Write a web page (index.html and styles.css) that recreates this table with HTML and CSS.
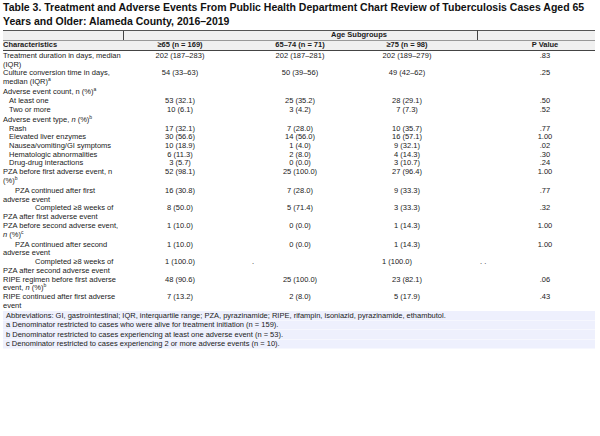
FILE: index.html
```html
<!DOCTYPE html>
<html>
<head>
<meta charset="utf-8">
<link rel="stylesheet" href="styles.css">
</head>
<body>
<div class="page">
<h1 class="title">Table 3. Treatment and Adverse Events From Public Health Department Chart Review of Tuberculosis Cases Aged 65 Years and Older: Alameda County, 2016–2019</h1>
<table class="tbl">
<colgroup><col class="c0"><col class="c1"><col class="c2"><col class="c3"><col class="c4"></colgroup>
<thead>
<tr class="h1"><th></th><th colspan="3" class="grp">Age Subgroups</th><th class="last"></th></tr>
<tr class="h2"><th class="lbl">Characteristics</th><th>≥65 (n = 169)</th><th>65–74 (n = 71)</th><th class="v3">≥75 (n = 98)</th><th class="pv">P Value</th></tr>
</thead>
<tbody>
<tr class="first"><td class="lbl">Treatment duration in days, median (IQR)</td><td>202 (187–283)</td><td>202 (187–281)</td><td class="v3">202 (189–279)</td><td class="pv">.83</td></tr>
<tr><td class="lbl">Culture conversion time in days, median (IQR)<sup>a</sup></td><td>54 (33–63)</td><td>50 (39–56)</td><td class="v3">49 (42–62)</td><td class="pv">.25</td></tr>
<tr class="sec"><td class="lbl">Adverse event count, n (%)<sup>a</sup></td><td></td><td></td><td class="v3"></td><td class="pv"></td></tr>
<tr><td class="lbl l1">At least one</td><td>53 (32.1)</td><td>25 (35.2)</td><td class="v3">28 (29.1)</td><td class="pv">.50</td></tr>
<tr><td class="lbl l1">Two or more</td><td>10 (6.1)</td><td>3 (4.2)</td><td class="v3">7 (7.3)</td><td class="pv">.52</td></tr>
<tr class="sec"><td class="lbl">Adverse event type, <i>n</i> (%)<sup>b</sup></td><td></td><td></td><td class="v3"></td><td class="pv"></td></tr>
<tr><td class="lbl l1">Rash</td><td>17 (32.1)</td><td>7 (28.0)</td><td class="v3">10 (35.7)</td><td class="pv">.77</td></tr>
<tr><td class="lbl l1">Elevated liver enzymes</td><td>30 (56.6)</td><td>14 (56.0)</td><td class="v3">16 (57.1)</td><td class="pv">1.00</td></tr>
<tr><td class="lbl l1">Nausea/vomiting/GI symptoms</td><td>10 (18.9)</td><td>1 (4.0)</td><td class="v3">9 (32.1)</td><td class="pv">.02</td></tr>
<tr><td class="lbl l1">Hematologic abnormalities</td><td>6 (11.3)</td><td>2 (8.0)</td><td class="v3">4 (14.3)</td><td class="pv">.30</td></tr>
<tr><td class="lbl l1">Drug-drug interactions</td><td>3 (5.7)</td><td>0 (0.0)</td><td class="v3">3 (10.7)</td><td class="pv">.24</td></tr>
<tr><td class="lbl">PZA before first adverse event, n (%)<sup>b</sup></td><td>52 (98.1)</td><td>25 (100.0)</td><td class="v3">27 (96.4)</td><td class="pv">1.00</td></tr>
<tr class="gap"><td class="lbl l2">PZA continued after first adverse event</td><td>16 (30.8)</td><td>7 (28.0)</td><td class="v3">9 (33.3)</td><td class="pv">.77</td></tr>
<tr><td class="lbl l3">Completed ≥8 weeks of PZA after first adverse event</td><td>8 (50.0)</td><td>5 (71.4)</td><td class="v3">3 (33.3)</td><td class="pv">.32</td></tr>
<tr><td class="lbl">PZA before second adverse event, <i>n</i> (%)<sup>c</sup></td><td>1 (10.0)</td><td>0 (0.0)</td><td class="v3">1 (14.3)</td><td class="pv">1.00</td></tr>
<tr class="gap"><td class="lbl l2">PZA continued after second adverse event</td><td>1 (10.0)</td><td>0 (0.0)</td><td class="v3">1 (14.3)</td><td class="pv">1.00</td></tr>
<tr><td class="lbl l3">Completed ≥8 weeks of PZA after second adverse event</td><td>1 (100.0)</td><td class="dot">.</td><td class="v3 v3b">1 (100.0)</td><td class="pv pvl">. .</td></tr>
<tr><td class="lbl">RIPE regimen before first adverse event, <i>n</i> (%)<sup>b</sup></td><td>48 (90.6)</td><td>25 (100.0)</td><td class="v3">23 (82.1)</td><td class="pv">.06</td></tr>
<tr><td class="lbl">RIPE continued after first adverse event</td><td>7 (13.2)</td><td>2 (8.0)</td><td class="v3">5 (17.9)</td><td class="pv">.43</td></tr>
</tbody>
</table>
<div class="notes">
<p>Abbreviations: GI, gastrointestinal; IQR, interquartile range; PZA, pyrazinamide; RIPE, rifampin, isoniazid, pyrazinamide, ethambutol.</p>
<p>a Denominator restricted to cases who were alive for treatment initiation (n = 159).</p>
<p>b Denominator restricted to cases experiencing at least one adverse event (n = 53).</p>
<p>c Denominator restricted to cases experiencing 2 or more adverse events (n = 10).</p>
</div>
</div>
</body>
</html>
```
FILE: styles.css
```css
html, body {
  margin: 0;
  padding: 0;
  background: #ffffff;
}
body {
  font-family: "Liberation Sans", Arial, sans-serif;
  color: #1a1a1a;
}
.page {
  padding: 0 5px 0 3px;
}
.title {
  margin: 0 0 2px 0;
  font-size: 10.5px;
  line-height: 14px;
  font-weight: bold;
  color: #111;
}
.tbl {
  width: 592px;
  border-collapse: collapse;
  table-layout: fixed;
  font-size: 7.5px;
  line-height: 8.7px;
}
.c0 { width: 120px; }
.c1 { width: 114px; }
.c2 { width: 126px; }
.c3 { width: 114px; }
.c4 { width: 118px; }
.tbl th {
  font-weight: bold;
  background: #f0f0f0;
  padding: 0;
  text-align: center;
  height: 9px;
}
.h1 th {
  border-top: 1px solid #555;
  border-bottom: 1px solid #999;
}
.h1 .grp {
  border-left: 1px solid #444;
  border-right: 1px solid #444;
  padding-left: 118px;
}
.h2 th {
  border-bottom: 1px solid #444;
}
.tbl td {
  padding: 0;
  text-align: center;
  vertical-align: top;
}
.tbl .lbl {
  text-align: left;
}
.tbl .v3 {
  padding-right: 26px;
}
.tbl .v3b {
  padding-right: 46px;
}
.tbl .pv {
  padding-left: 18px;
}
.tbl .pvl {
  text-align: left;
  padding-left: 3px;
}
.tbl .dot {
  text-align: left;
  padding-left: 15px;
}
.first td {
  padding-top: 1px;
}
.sec td {
  padding-top: 1.5px;
}
.gap td {
  padding-top: 1.5px;
}
.l1 {
  padding-left: 6px !important;
}
.l2 {
  text-indent: 12px;
}
.l3 {
  text-indent: 32px;
}
sup {
  font-size: 5px;
  line-height: 0;
  vertical-align: 3px;
}
.notes {
  margin-top: 1px;
  width: 592px;
  background: #eef0fd;
  font-size: 7.5px;
  line-height: 8px;
}
.notes p {
  margin: 0;
  padding: 0.5px 3px 0 3px;
  border-bottom: 1px solid #f6f7fe;
}
```
